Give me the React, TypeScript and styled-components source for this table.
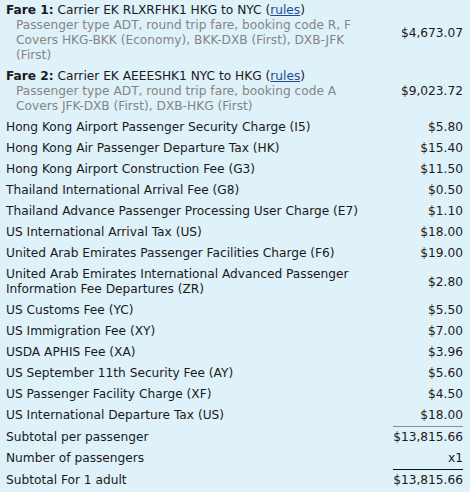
import React from "react";
import styled, { createGlobalStyle } from "styled-components";

const GlobalStyle = createGlobalStyle`
    html, body {
        margin: 0;
        padding: 0;
        background: #dff1f9;
    }
    body {
        font-family: Verdana, "DejaVu Sans", sans-serif;
        font-size: 12.2px;
        color: #1a1a1a;
    }
`;

const Wrapper = styled.div`
    width: 470px;
    padding: 0 7px 0 6px;
    box-sizing: border-box;
`;

const Table = styled.table`
    width: 100%;
    border-collapse: collapse;
    line-height: 15px;
`;

const Label = styled.td`
    padding: 3px 0;
    vertical-align: middle;
`;

const Amount = styled.td<{ $rule?: "grey" | "black" }>`
    padding: 3px 0;
    text-align: right;
    vertical-align: middle;
    white-space: nowrap;
    border-top: ${(p) =>
        p.$rule === "grey"
            ? "1px solid #8a8f92"
            : p.$rule === "black"
            ? "1px solid #111"
            : "none"};
`;

const FareTitle = styled.div`
    strong {
        font-weight: bold;
    }
`;

const FareDetail = styled.div`
    padding-left: 10px;
    color: #858585;
`;

const RulesLink = styled.a`
    color: #1b4b9b;
    text-decoration: underline;
`;

type Fare = {
    num: number;
    carrier: string;
    details: string[];
    amount: string;
};

const fares: Fare[] = [
    {
        num: 1,
        carrier: "Carrier EK RLXRFHK1 HKG to NYC",
        details: [
            "Passenger type ADT, round trip fare, booking code R, F",
            "Covers HKG-BKK (Economy), BKK-DXB (First), DXB-JFK",
            "(First)",
        ],
        amount: "$4,673.07",
    },
    {
        num: 2,
        carrier: "Carrier EK AEEESHK1 NYC to HKG",
        details: [
            "Passenger type ADT, round trip fare, booking code A",
            "Covers JFK-DXB (First), DXB-HKG (First)",
        ],
        amount: "$9,023.72",
    },
];

const taxes: [string, string][] = [
    ["Hong Kong Airport Passenger Security Charge (I5)", "$5.80"],
    ["Hong Kong Air Passenger Departure Tax (HK)", "$15.40"],
    ["Hong Kong Airport Construction Fee (G3)", "$11.50"],
    ["Thailand International Arrival Fee (G8)", "$0.50"],
    ["Thailand Advance Passenger Processing User Charge (E7)", "$1.10"],
    ["US International Arrival Tax (US)", "$18.00"],
    ["United Arab Emirates Passenger Facilities Charge (F6)", "$19.00"],
    [
        "United Arab Emirates International Advanced Passenger Information Fee Departures (ZR)",
        "$2.80",
    ],
    ["US Customs Fee (YC)", "$5.50"],
    ["US Immigration Fee (XY)", "$7.00"],
    ["USDA APHIS Fee (XA)", "$3.96"],
    ["US September 11th Security Fee (AY)", "$5.60"],
    ["US Passenger Facility Charge (XF)", "$4.50"],
    ["US International Departure Tax (US)", "$18.00"],
];

const App: React.FC = () => {
    return (
        <Wrapper>
            <GlobalStyle />
            <Table>
                <tbody>
                    {fares.map((f) => (
                        <tr key={f.num}>
                            <Label>
                                <FareTitle>
                                    <strong>Fare {f.num}:</strong> {f.carrier} (
                                    <RulesLink href="#">rules</RulesLink>)
                                </FareTitle>
                                {f.details.map((d) => (
                                    <FareDetail key={d}>{d}</FareDetail>
                                ))}
                            </Label>
                            <Amount>{f.amount}</Amount>
                        </tr>
                    ))}
                    {taxes.map(([name, amount]) => (
                        <tr key={name}>
                            <Label>{name}</Label>
                            <Amount>{amount}</Amount>
                        </tr>
                    ))}
                    <tr>
                        <Label>Subtotal per passenger</Label>
                        <Amount $rule="grey">$13,815.66</Amount>
                    </tr>
                    <tr>
                        <Label>Number of passengers</Label>
                        <Amount>x1</Amount>
                    </tr>
                    <tr>
                        <Label>Subtotal For 1 adult</Label>
                        <Amount $rule="black">$13,815.66</Amount>
                    </tr>
                </tbody>
            </Table>
        </Wrapper>
    );
};

export default App;
